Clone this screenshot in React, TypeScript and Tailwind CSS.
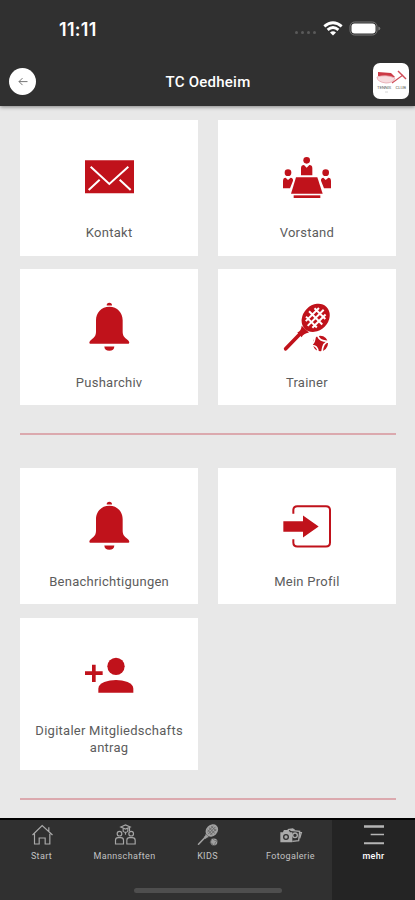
import type { ReactNode } from "react";

/* ------------------ CARD ICONS ------------------ */
function MailIcon() {
  return (
    <svg viewBox="36 18 162 162" className="size-[54px]">
      <path fill="#c0121b" d="M45 46h147v99H45z" />
      <path
        fill="none"
        stroke="#fff"
        strokeWidth="6"
        d="M62 65l56 52 57-52M56 135l33-31M182 135l-33-31"
      />
    </svg>
  );
}

function BoardIcon() {
  return (
    <svg viewBox="39 18 162 162" className="size-[54px]" fill="#c0121b">
      <circle cx="119" cy="46" r="10" />
      <path d="M102 91V70q0-10 9-10l8 8 8-8q9 0 9 10v21z" />
      <circle cx="63" cy="83" r="10" />
      <path d="M48 130V108q0-10 8-10l7 7 8-7q8 1 7 9l-9 23z" />
      <circle cx="176" cy="83" r="10" />
      <path d="M192 130V108q0-10-8-10l-8 7-7-7q-8 1-7 9l9 23z" />
      <path d="M87 97h64l16 49H72z" />
      <path d="M80 151h80v8H80z" />
    </svg>
  );
}

function BellIcon() {
  return (
    <svg viewBox="36 16.5 162 162" className="size-[54px]" fill="#c0121b">
      <path d="M110 30q0-8 8-8t8 8z" />
      <path d="M118 34c-24 0-40 18-40 40v34c0 12-4 17-14 25-8 6-7 12-2 12h112c5 0 6-6-2-12-10-8-14-13-14-25V74c0-22-16-40-40-40z" />
      <path d="M103 153h30q-1 13-15 13t-15-13z" />
    </svg>
  );
}

function RacketIcon({
  className,
  color,
  ground,
}: {
  className: string;
  color: string;
  ground: string;
}) {
  return (
    <svg viewBox="39 16.5 162 162" className={className}>
      <path d="M56 160l45-47" stroke={color} strokeWidth="11" strokeLinecap="round" />
      <path d="M91 111q12-4 13-20l22 20q-17 3-22 14z" fill={color} />
      <g transform="rotate(-45 146 67)">
        <ellipse cx="146" cy="67" rx="46" ry="38" fill={color} />
        <path
          d="M118 53h56M112 67h68M118 81h56M128 44v46M146 39v56M164 44v46"
          fill="none"
          stroke={ground}
          strokeWidth="6"
        />
      </g>
      <circle cx="160" cy="144" r="23" fill={color} />
      <path
        d="M144 122q0 18-11 26M185 139q-17 0-20 30M152 121q8 18 33 16M135 150q17 0 18 19"
        fill="none"
        stroke={ground}
        strokeWidth="5"
      />
    </svg>
  );
}

function LoginIcon() {
  return (
    <svg viewBox="39 13.5 162 162" className="size-[54px]">
      <path
        d="M79 55V44q0-12 12-12h86q12 0 12 12v97q0 12-12 12H91q-12 0-12-12v-10"
        fill="none"
        stroke="#c0121b"
        strokeWidth="6"
      />
      <path d="M49 77h59V60l47 33-47 33v-17H49z" fill="#c0121b" />
    </svg>
  );
}

function AddUserIcon() {
  return (
    <svg viewBox="186 27 162 162" className="size-[54px]" fill="#c0121b">
      <circle cx="288" cy="79" r="26" />
      <path d="M235 158v-12c0-18 30-26 53-26s52 8 52 26v12z" />
      <path d="M216 74h11v20h21v11h-21v21h-11v-21h-21V94h21z" />
    </svg>
  );
}

/* ------------------ TAB ICONS ------------------ */
function HomeIcon() {
  return (
    <svg viewBox="88.5 39 72 72" className="size-6" fill="none" stroke="#aaa" strokeWidth="3.5">
      <path d="M96 75l29-28 31 28M102 71v31h14V84h18v18h14V71M145 63V52" />
    </svg>
  );
}

function TeamsIcon() {
  return (
    <svg viewBox="338.5 39 72 72" className="size-6" fill="none" stroke="#a6a6a6" strokeWidth="3.5">
      <path d="M362 51l14-6 14 6-14 6zM369 56v8q7 6 14 0v-8M388 53v10" />
      <path d="M376 66v8" />
      <circle cx="358" cy="71" r="7" />
      <circle cx="393" cy="71" r="7" />
      <path d="M346 102V91q0-8 8-8h8q8 0 8 8v11zM380 102V91q0-8 8-8h8q9 0 9 8v11z" />
    </svg>
  );
}

function GalleryIcon() {
  return (
    <svg viewBox="222 39 72 72" className="size-6" fill="none" stroke="#aaa" strokeWidth="4">
      <path d="M228 69h7l3-7h12l4 7h6v26h-32z" fill="#aaa" />
      <circle cx="243" cy="81" r="7" stroke="#303030" />
      <path d="M256 61l28 3-3 28-19 2" />
      <circle cx="270" cy="76" r="7" />
      <path d="M248 59l15-2 6 4" />
      <path d="M284 68h5l-5 17" />
    </svg>
  );
}

function MoreIcon() {
  return (
    <svg viewBox="471 39 72 72" className="size-6" fill="#b5b5b5">
      <path d="M477 46h60v7h-60zM497 71h40v5h-40zM477 97h60v6h-60z" />
    </svg>
  );
}

/* ------------------ HEADER ------------------ */
function StatusBar() {
  return (
    <div className="flex h-[57px] items-center justify-between pl-[59px] pr-[34px] text-white">
      <span className="pt-0.5 font-['Inter',sans-serif] text-[18px] font-semibold leading-5 tracking-[0.3px]">
        11:11
      </span>
      <div className="flex items-center">
        <div className="mt-2 flex gap-[2.5px] pr-[7px]">
          <i className="size-[3.5px] rounded-full bg-[#5a5a5a]" />
          <i className="size-[3.5px] rounded-full bg-[#5a5a5a]" />
          <i className="size-[3.5px] rounded-full bg-[#5a5a5a]" />
          <i className="size-[3.5px] rounded-full bg-[#5a5a5a]" />
        </div>
        <svg viewBox="0 0 20 15" className="mr-1.5 h-[15px] w-5" fill="none" stroke="#fff" strokeWidth="2.8">
          <path d="M1.3 5.4q8.7-7.4 17.4 0M4.6 8.9q5.4-4.7 10.8 0" />
          <path d="M10 14.5l-3-3q3-2.4 6 0z" fill="#fff" stroke="none" />
        </svg>
        <svg viewBox="0 0 32 15" className="h-[15px] w-8">
          <rect x="1" y="1" width="27" height="13" rx="4.5" fill="none" stroke="#777" strokeWidth="1" />
          <rect x="2.5" y="2.5" width="24" height="10" rx="3" fill="#fff" />
          <path d="M29.3 5.5q2 .5 2 2t-2 2z" fill="#777" />
        </svg>
      </div>
    </div>
  );
}

function ClubLogo() {
  return (
    <div className="flex size-9 items-center justify-center rounded-[7px] bg-white">
      <svg viewBox="0 0 36 36" className="size-9">
        <path d="M5 9l13 1 4 4-3 1-14-2z" fill="#cc3945" />
        <path d="M4 14q9-3 18 1-2 5-9 5-9-1-9-6z" fill="#f7dde0" stroke="#e6a5ac" strokeWidth=".8" />
        <path d="M25 8l8 8" stroke="#cf4c58" strokeWidth="1.5" />
        <path d="M19 20l11-8" stroke="#cf4c58" strokeWidth="1.1" />
        <text x="4" y="25.5" fontSize="4.4" textLength="14" fill="#666" fontFamily="Roboto, sans-serif">
          TENNIS
        </text>
        <text x="22.5" y="25.5" fontSize="4.4" textLength="10.5" fill="#666" fontFamily="Roboto, sans-serif">
          CLUB
        </text>
        <path d="M12 29h3" stroke="#ccc" strokeWidth=".8" />
      </svg>
    </div>
  );
}

function Header() {
  return (
    <header className="z-10 h-[106px] shrink-0 bg-[#303030] shadow-[0_1px_4px_rgba(0,0,0,0.45)]">
      <StatusBar />
      <div className="flex h-12 items-center justify-between pl-[9px] pr-[6px]">
        <div className="flex w-[34px]">
          <button className="flex size-[27px] items-center justify-center rounded-full bg-white">
            <svg viewBox="0 0 10 10" className="size-2.5" fill="none" stroke="#777" strokeWidth="1">
              <path d="M9.5 5.6H1M4.5 2.1L1 5.6l3.5 3.5" />
            </svg>
          </button>
        </div>
        <h1 className="pt-0.5 text-[15px] font-medium tracking-[0.25px] text-white">TC Oedheim</h1>
        <ClubLogo />
      </div>
    </header>
  );
}

/* ------------------ CARDS ------------------ */
function Card({ icon, children }: { icon: ReactNode; children: ReactNode }) {
  return (
    <div className="flex min-h-[136px] flex-col items-center bg-white pb-[14px] pt-[31.5px]">
      {icon}
      <p className="mt-[19px] text-center text-[13px] leading-[17px] tracking-[0.26px] text-[#5c5c5c]">
        {children}
      </p>
    </div>
  );
}

function CardGrid({ children }: { children: ReactNode }) {
  return <div className="grid grid-cols-2 gap-x-[19.5px] gap-y-[13.5px]">{children}</div>;
}

function Divider() {
  return <hr className="mt-7 h-[2px] border-0 bg-[#dba9ae]" />;
}

/* ------------------ TAB BAR ------------------ */
function Tab({ icon, label, active }: { icon: ReactNode; label: string; active?: boolean }) {
  return (
    <div className={`flex flex-1 flex-col items-center pt-[3px] ${active ? "bg-[#242424]" : ""}`}>
      {icon}
      <span
        className={`mt-[3px] text-[9px] leading-3 tracking-[0.35px] ${
          active ? "font-medium text-white" : "text-[#c2c2c2]"
        }`}
      >
        {label}
      </span>
    </div>
  );
}

function TabBar() {
  return (
    <nav className="relative flex h-[82px] shrink-0 border-t-2 border-black bg-[#303030]">
      <Tab icon={<HomeIcon />} label="Start" />
      <Tab icon={<TeamsIcon />} label="Mannschaften" />
      <Tab icon={<RacketIcon className="size-6" color="#a0a0a0" ground="#666" />} label="KIDS" />
      <Tab icon={<GalleryIcon />} label="Fotogalerie" />
      <Tab icon={<MoreIcon />} label="mehr" active />
      <div className="absolute bottom-[7px] left-[134px] h-[5px] w-[148px] rounded-full bg-[#4e4e4e]" />
    </nav>
  );
}

export default function App() {
  return (
    <div className="flex h-[900px] w-[415px] flex-col overflow-hidden bg-[#e8e8e8] font-['Roboto',sans-serif]">
      <Header />
      <main className="min-h-0 flex-1 overflow-hidden pl-5 pr-[19px] pt-[13.5px]">
        <CardGrid>
          <Card icon={<MailIcon />}>Kontakt</Card>
          <Card icon={<BoardIcon />}>Vorstand</Card>
          <Card icon={<BellIcon />}>Pusharchiv</Card>
          <Card
            icon={<RacketIcon className="size-[54px]" color="#c0121b" ground="#fff" />}
          >
            Trainer
          </Card>
        </CardGrid>
        <Divider />
        <div className="mt-[33px]">
          <CardGrid>
            <Card icon={<BellIcon />}>Benachrichtigungen</Card>
            <Card icon={<LoginIcon />}>Mein Profil</Card>
            <Card icon={<AddUserIcon />}>
              Digitaler Mitgliedschafts
              <br />
              antrag
            </Card>
          </CardGrid>
        </div>
        <Divider />
      </main>
      <TabBar />
    </div>
  );
}
